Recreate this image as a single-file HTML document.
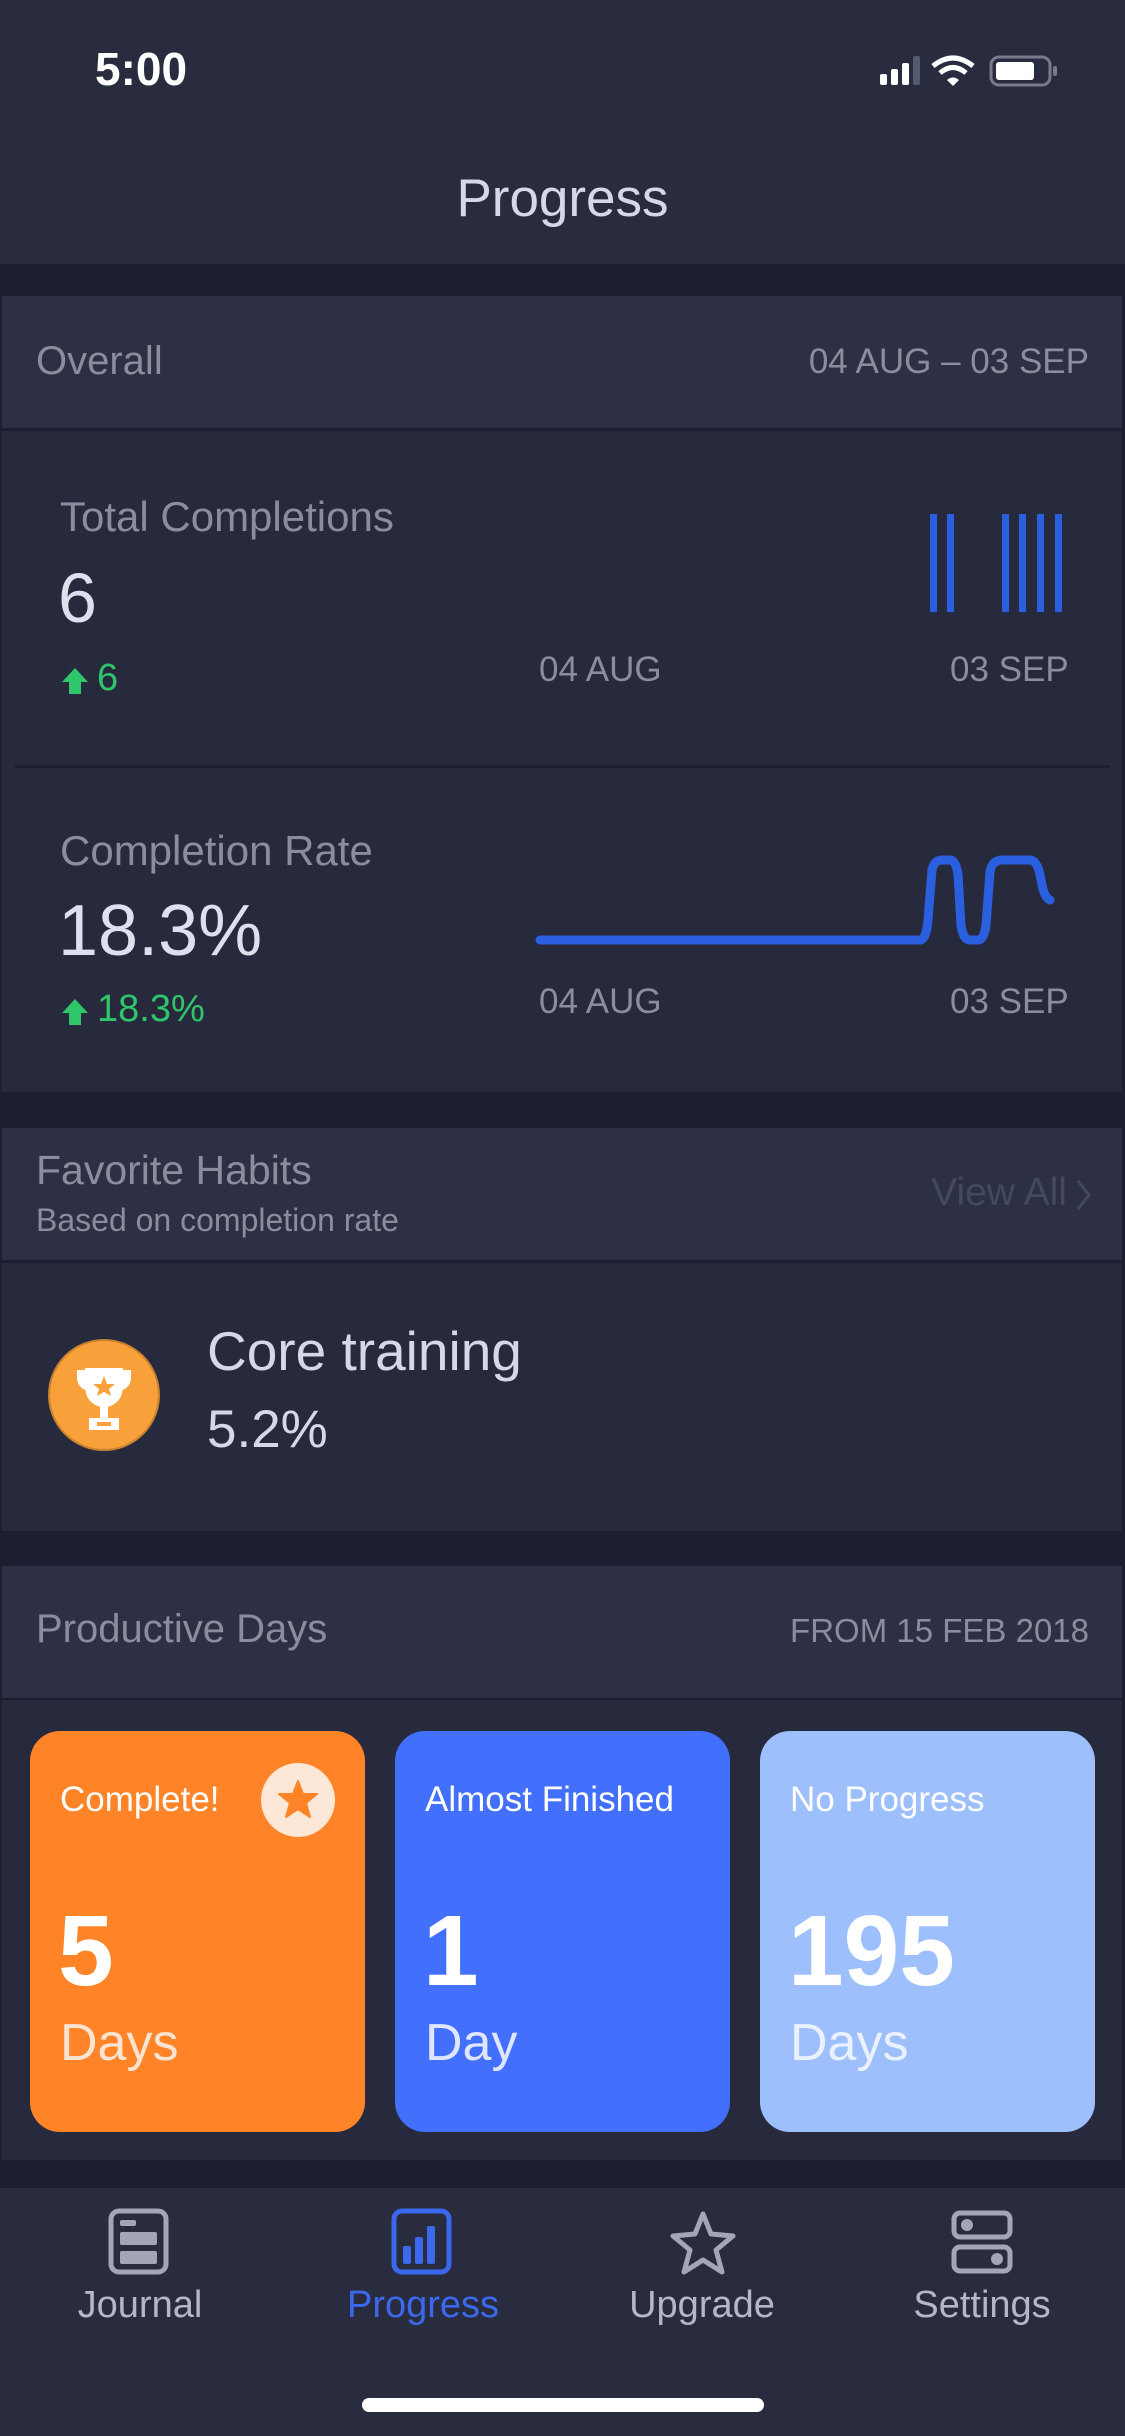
<!DOCTYPE html>
<html><head><meta charset="utf-8"><style>
*{margin:0;padding:0;box-sizing:border-box}
body{width:1125px;height:2436px;background:#1c1f31;font-family:"Liberation Sans",sans-serif;position:relative;overflow:hidden}
.a{position:absolute;white-space:nowrap}
.hd{background:#2d3044}
.cd{background:#272a3d}
.g{color:#8a8d9e}
.w{color:#dfe0ee}
.gr{color:#2fc56a}
</style></head><body>
<div class="a" style="left:0;top:0;width:1125px;height:264px;background:#292c3f"></div>
<div class="a" style="left:95px;top:42px;font-size:46px;color:#fff;font-weight:bold">5:00</div>
<svg class="a" style="left:878px;top:52px" width="205" height="40" viewBox="0 0 205 40">
<rect x="2" y="22" width="7" height="11" rx="2" fill="#fff"/><rect x="13" y="17" width="7" height="16" rx="2" fill="#fff"/><rect x="24" y="11" width="7" height="22" rx="2" fill="#fff"/><rect x="35" y="4" width="7" height="29" rx="2" fill="#555a6e"/>
<path d="M55 14 Q75 -2 95 14" stroke="#fff" stroke-width="5" fill="none"/><path d="M62 21 Q75 10 88 21" stroke="#fff" stroke-width="5" fill="none"/><path d="M69 28 L75 34 L81 28 Q75 23 69 28Z" fill="#fff"/>
<rect x="113" y="5" width="59" height="28" rx="8" stroke="#777b8c" stroke-width="3" fill="none"/><rect x="118" y="10" width="38" height="18" rx="3" fill="#fff"/><rect x="175" y="14" width="4" height="10" rx="2" fill="#777b8c"/>
</svg>
<div class="a" style="left:0;width:1125px;top:168px;text-align:center;font-size:53px;color:#d6d8ea">Progress</div>

<div class="a hd" style="left:2px;top:296px;width:1120px;height:132px"></div>
<div class="a g" style="left:36px;top:339px;font-size:40px">Overall</div>
<div class="a g" style="right:36px;top:342px;font-size:35px">04 AUG – 03 SEP</div>
<div class="a cd" style="left:2px;top:431px;width:1120px;height:661px"></div>
<div class="a g" style="left:60px;top:493px;font-size:42px">Total Completions</div>
<div class="a w" style="left:58px;top:558px;font-size:70px">6</div>
<svg class="a" style="left:60px;top:666px" width="30" height="30"><path d="M15 2 L28 16 H21 V28 H9 V16 H2Z" fill="#2fc56a"/></svg>
<div class="a gr" style="left:97px;top:657px;font-size:38px">6</div>
<div class="a g" style="left:539px;top:650px;font-size:35px">04 AUG</div>
<div class="a g" style="left:950px;top:650px;font-size:35px">03 SEP</div>
<svg class="a" style="left:920px;top:510px" width="150" height="105"><g fill="#2a5fe0"><rect x="10" y="4" width="7" height="98"/><rect x="27" y="4" width="7" height="98"/><rect x="82" y="4" width="7" height="98"/><rect x="99" y="4" width="7" height="98"/><rect x="117" y="4" width="7" height="98"/><rect x="135" y="4" width="7" height="98"/></g></svg>
<div class="a" style="left:15px;top:765px;width:1095px;height:3px;background:#1d2031"></div>
<div class="a g" style="left:60px;top:827px;font-size:42px">Completion Rate</div>
<div class="a w" style="left:58px;top:890px;font-size:72px">18.3%</div>
<svg class="a" style="left:60px;top:997px" width="30" height="30"><path d="M15 2 L28 16 H21 V28 H9 V16 H2Z" fill="#2fc56a"/></svg>
<div class="a gr" style="left:97px;top:988px;font-size:38px">18.3%</div>
<div class="a g" style="left:539px;top:982px;font-size:35px">04 AUG</div>
<div class="a g" style="left:950px;top:982px;font-size:35px">03 SEP</div>
<svg class="a" style="left:530px;top:840px" width="550" height="120"><path d="M10 100 L390 100 Q396 100 398 80 L402 30 Q404 20 412 20 L420 20 Q426 20 428 35 L431 85 Q433 100 440 100 L448 100 Q454 100 456 85 L460 32 Q462 20 472 20 L500 20 Q508 20 511 40 Q514 58 520 60" stroke="#2a5fe0" stroke-width="9" fill="none" stroke-linecap="round"/></svg>

<div class="a hd" style="left:2px;top:1128px;width:1120px;height:132px"></div>
<div class="a g" style="left:36px;top:1147px;font-size:41px">Favorite Habits</div>
<div class="a g" style="left:36px;top:1202px;font-size:32px">Based on completion rate</div>
<div class="a" style="right:58px;top:1171px;font-size:39px;color:#444962">View All</div>
<svg class="a" style="left:1074px;top:1178px" width="20" height="34"><path d="M4 3 L15 17 L4 31" stroke="#444962" stroke-width="3" fill="none"/></svg>
<div class="a cd" style="left:2px;top:1263px;width:1120px;height:268px"></div>
<svg class="a" style="left:47px;top:1338px" width="114" height="114"><circle cx="57" cy="57" r="55" fill="#f8a03a" stroke="#c98130" stroke-width="2"/>
<g fill="#fff"><path d="M38 30 H76 V48 Q76 66 57 70 Q38 66 38 48Z"/><path d="M30 32 H38 V52 Q30 48 30 40Z" /><path d="M84 32 H76 V52 Q84 48 84 40Z"/><rect x="53" y="68" width="8" height="14"/><rect x="42" y="80" width="30" height="12"/></g>
<rect x="50" y="84" width="14" height="4" fill="#f8a03a"/><path d="M57 38 L60 46 L68 46 L62 51 L64 58 L57 54 L50 58 L52 51 L46 46 L54 46Z" fill="#f8a03a"/></svg>
<div class="a" style="left:207px;top:1319px;font-size:55px;color:#d6d8ea">Core training</div>
<div class="a" style="left:207px;top:1399px;font-size:53px;color:#d6d8ea">5.2%</div>

<div class="a hd" style="left:2px;top:1566px;width:1120px;height:132px"></div>
<div class="a g" style="left:36px;top:1607px;font-size:40px">Productive Days</div>
<div class="a g" style="right:36px;top:1612px;font-size:33px">FROM 15 FEB 2018</div>
<div class="a cd" style="left:2px;top:1700px;width:1120px;height:460px"></div>
<div class="a" style="left:30px;top:1731px;width:335px;height:401px;border-radius:30px;background:#fe8427"></div>
<div class="a" style="left:395px;top:1731px;width:335px;height:401px;border-radius:30px;background:#4270fc"></div>
<div class="a" style="left:760px;top:1731px;width:335px;height:401px;border-radius:30px;background:#9dbffb"></div>
<svg class="a" style="left:259px;top:1761px" width="78" height="78"><circle cx="39" cy="39" r="37" fill="#fde7d6"/><path d="M39 20 L44 33 L58 33 L47 42 L51 56 L39 48 L27 56 L31 42 L20 33 L34 33Z" fill="#fe8427" stroke="#fe8427" stroke-width="2" stroke-linejoin="round"/></svg>
<div class="a" style="left:60px;top:1780px;font-size:35px;color:#fff">Complete!</div>
<div class="a" style="left:425px;top:1780px;font-size:35px;color:#fff">Almost Finished</div>
<div class="a" style="left:790px;top:1780px;font-size:35px;color:#fff">No Progress</div>
<div class="a" style="left:58px;top:1894px;font-size:100px;color:#fff;font-weight:bold">5</div>
<div class="a" style="left:423px;top:1894px;font-size:100px;color:#fff;font-weight:bold">1</div>
<div class="a" style="left:788px;top:1894px;font-size:100px;color:#fff;font-weight:bold">195</div>
<div class="a" style="left:60px;top:2013px;font-size:52px;color:#fbe3d2">Days</div>
<div class="a" style="left:425px;top:2013px;font-size:52px;color:#dfe6ff">Day</div>
<div class="a" style="left:790px;top:2013px;font-size:52px;color:#eaf1ff">Days</div>

<div class="a" style="left:0;top:2188px;width:1125px;height:248px;background:#292c3f"></div>
<svg class="a" style="left:108px;top:2208px" width="64" height="68"><rect x="3" y="3" width="55" height="61" rx="8" stroke="#a3a6b8" stroke-width="5" fill="none"/><rect x="12" y="12" width="16" height="6" rx="2" fill="#a3a6b8"/><rect x="12" y="24" width="37" height="13" rx="2" fill="#a3a6b8"/><rect x="12" y="43" width="37" height="13" rx="2" fill="#a3a6b8"/></svg>
<svg class="a" style="left:391px;top:2208px" width="64" height="68"><rect x="3" y="3" width="55" height="61" rx="8" stroke="#3b68ec" stroke-width="5" fill="none"/><rect x="12" y="38" width="8" height="18" rx="2" fill="#3b68ec"/><rect x="24" y="29" width="8" height="27" rx="2" fill="#3b68ec"/><rect x="36" y="18" width="8" height="38" rx="2" fill="#3b68ec"/></svg>
<svg class="a" style="left:669px;top:2210px" width="68" height="66"><path d="M34 4 L42 24 L64 26 L47 40 L53 62 L34 50 L15 62 L21 40 L4 26 L26 24Z" stroke="#a3a6b8" stroke-width="5" fill="none" stroke-linejoin="round"/></svg>
<svg class="a" style="left:951px;top:2210px" width="64" height="66"><rect x="3" y="3" width="56" height="24" rx="6" stroke="#a3a6b8" stroke-width="5" fill="none"/><circle cx="16" cy="15" r="6" fill="#a3a6b8"/><rect x="3" y="37" width="56" height="24" rx="6" stroke="#a3a6b8" stroke-width="5" fill="none"/><circle cx="46" cy="49" r="6" fill="#a3a6b8"/></svg>
<div class="a" style="left:40px;width:200px;top:2284px;text-align:center;font-size:38px;color:#b4b7c8">Journal</div>
<div class="a" style="left:323px;width:200px;top:2284px;text-align:center;font-size:38px;color:#3b68ec">Progress</div>
<div class="a" style="left:602px;width:200px;top:2284px;text-align:center;font-size:38px;color:#b4b7c8">Upgrade</div>
<div class="a" style="left:882px;width:200px;top:2284px;text-align:center;font-size:38px;color:#b4b7c8">Settings</div>
<div class="a" style="left:362px;top:2398px;width:402px;height:14px;border-radius:7px;background:#fff"></div>
</body></html>
